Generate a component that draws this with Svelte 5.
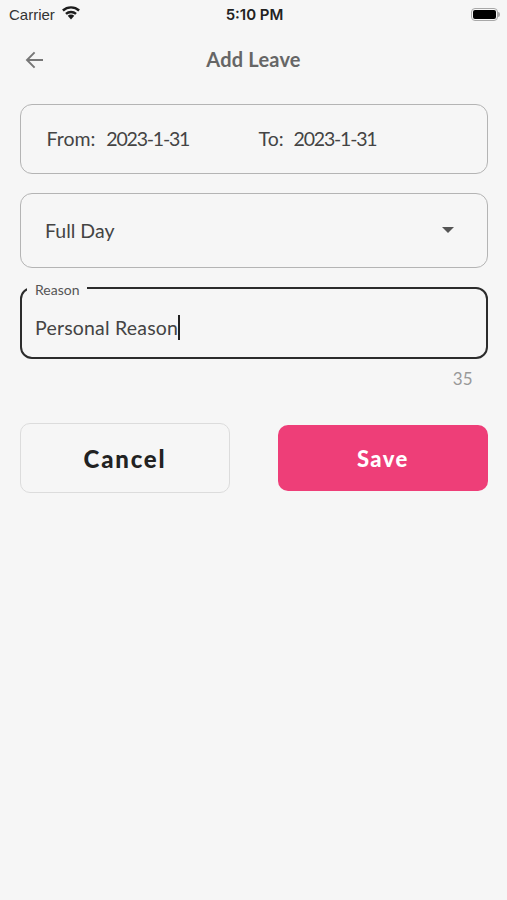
<script>
  let from = '2023-1-31';
  let to = '2023-1-31';
</script>

<div class="page">
  <div class="status">
    <div class="status-left">
      <span class="carrier">Carrier</span>
      <svg class="wifi" width="20" height="15" viewBox="0 0 19 14">
        <path d="M9.5 13.6 L6.4 10.2 A4.4 4.4 0 0 1 12.6 10.2 Z" fill="#1c1c1c" />
        <path d="M4.7 8.3 A7.2 7.2 0 0 1 14.3 8.3" fill="none" stroke="#1c1c1c" stroke-width="2.3" />
        <path d="M1.8 5.1 A11.4 11.4 0 0 1 17.2 5.1" fill="none" stroke="#1c1c1c" stroke-width="2.3" />
      </svg>
    </div>
    <span class="time">5:10 PM</span>
    <div class="battery">
      <div class="battery-body"><div class="battery-fill"></div></div>
      <div class="battery-tip"></div>
    </div>
  </div>

  <div class="nav">
    <svg class="back" width="24" height="24" viewBox="0 0 24 24">
      <path d="M22.5 12 H3 M12 2.5 L2.5 12 L12 21.5" fill="none" stroke="#777" stroke-width="2.4" transform="translate(2 2.4) scale(0.8)" />
    </svg>
    <span class="title">Add Leave</span>
  </div>

  <div class="form">
    <div class="box dates">
      <span class="from">From:&nbsp; <span class="date">{from}</span></span>
      <span class="to">To:&nbsp; <span class="date">{to}</span></span>
    </div>

    <div class="box select">
      <span>Full Day</span>
      <span class="caret"></span>
    </div>

    <div class="reason">
      <span class="reason-label">Reason</span>
      <span class="reason-text">Personal Reason</span><span class="cursor"></span>
    </div>
    <div class="counter">35</div>

    <div class="buttons">
      <button class="cancel">Cancel</button>
      <button class="save">Save</button>
    </div>
  </div>
</div>

<style>
  :global(body) {
    margin: 0;
    background: #f6f6f6;
  }
  .page {
    width: 507px;
    height: 900px;
    background: #f6f6f6;
    font-family: Lato, "Open Sans", sans-serif;
    color: #444;
    overflow: hidden;
  }

  /* status bar */
  .status {
    height: 28px;
    padding: 0 7px 0 9px;
    display: grid;
    grid-template-columns: 1fr auto 1fr;
    align-items: center;
  }
  .status-left {
    display: flex;
    align-items: center;
    gap: 6px;
  }
  .carrier {
    font: 15px "Liberation Sans", sans-serif;
    color: #333;
  }
  .wifi {
    margin-top: -4px;
  }
  .time {
    font: 600 15px Inter, "Liberation Sans", sans-serif;
    color: #222;
  }
  .battery {
    justify-self: end;
    display: flex;
    align-items: center;
  }
  .battery-body {
    width: 27px;
    height: 13px;
    box-sizing: border-box;
    border: 1.5px solid #a8a8a8;
    border-radius: 4px;
    padding: 1px;
  }
  .battery-fill {
    height: 100%;
    background: #000;
    border-radius: 2px;
  }
  .battery-tip {
    width: 2px;
    height: 5px;
    background: #a8a8a8;
    border-radius: 0 2px 2px 0;
  }

  /* nav */
  .nav {
    height: 48px;
    margin-top: 7px;
    position: relative;
    display: flex;
    align-items: center;
    justify-content: center;
  }
  .back {
    position: absolute;
    left: 23px;
    top: 13px;
  }
  .title {
    font-size: 20px;
    font-weight: 700;
    color: #666;
    letter-spacing: 0.2px;
  }

  /* form */
  .form {
    padding: 20.5px 19.5px 0 20px;
  }
  .box {
    box-sizing: border-box;
    border: 1px solid #b4b4b4;
    border-radius: 12px;
    font-size: 19.5px;
    color: #444;
  }
  .dates {
    height: 70px;
    display: flex;
    align-items: center;
    padding-left: 25.5px;
  }
  .from {
    width: 212px;
  }
  .date {
    letter-spacing: -1.2px;
    margin-left: 1px;
  }
  .to .date {
    margin-left: 0;
  }
  .select {
    height: 75px;
    margin-top: 19px;
    display: flex;
    align-items: center;
    justify-content: space-between;
    padding: 0 33px 0 24px;
  }
  .caret {
    width: 0;
    height: 0;
    border-left: 6px solid transparent;
    border-right: 6px solid transparent;
    border-top: 6px solid #555;
  }
  .reason {
    box-sizing: border-box;
    height: 71.5px;
    margin-top: 19.5px;
    border: 2px solid #2c2c2c;
    border-radius: 12px;
    position: relative;
    display: flex;
    align-items: center;
    padding: 9px 0 0 13px;
    font-size: 19.5px;
    color: #444;
  }
  .reason-text {
    letter-spacing: 0.2px;
  }
  .reason-label {
    position: absolute;
    left: 5px;
    top: -7px;
    padding: 0 8px;
    background: #f6f6f6;
    font-size: 14px;
    line-height: 16px;
    color: #555;
  }
  .cursor {
    display: inline-block;
    width: 2px;
    height: 25px;
    background: #222;
  }
  .counter {
    text-align: right;
    font-size: 17px;
    line-height: 20px;
    color: #999;
    padding: 10px 15px 0 0;
  }
  .buttons {
    margin-top: 34.5px;
    display: flex;
    justify-content: space-between;
    align-items: center;
  }
  button {
    font-family: inherit;
    font-weight: 900;
    cursor: pointer;
    border-radius: 10px;
  }
  .cancel {
    width: 210px;
    height: 70px;
    background: #f6f6f6;
    border: 1.5px solid #dcdcdc;
    color: #222;
    font-size: 24px;
    letter-spacing: 1.8px;
  }
  .save {
    width: 209.5px;
    height: 66px;
    background: #ee3e78;
    border: none;
    color: #fff;
    font-size: 22px;
    letter-spacing: 1.4px;
  }
</style>
